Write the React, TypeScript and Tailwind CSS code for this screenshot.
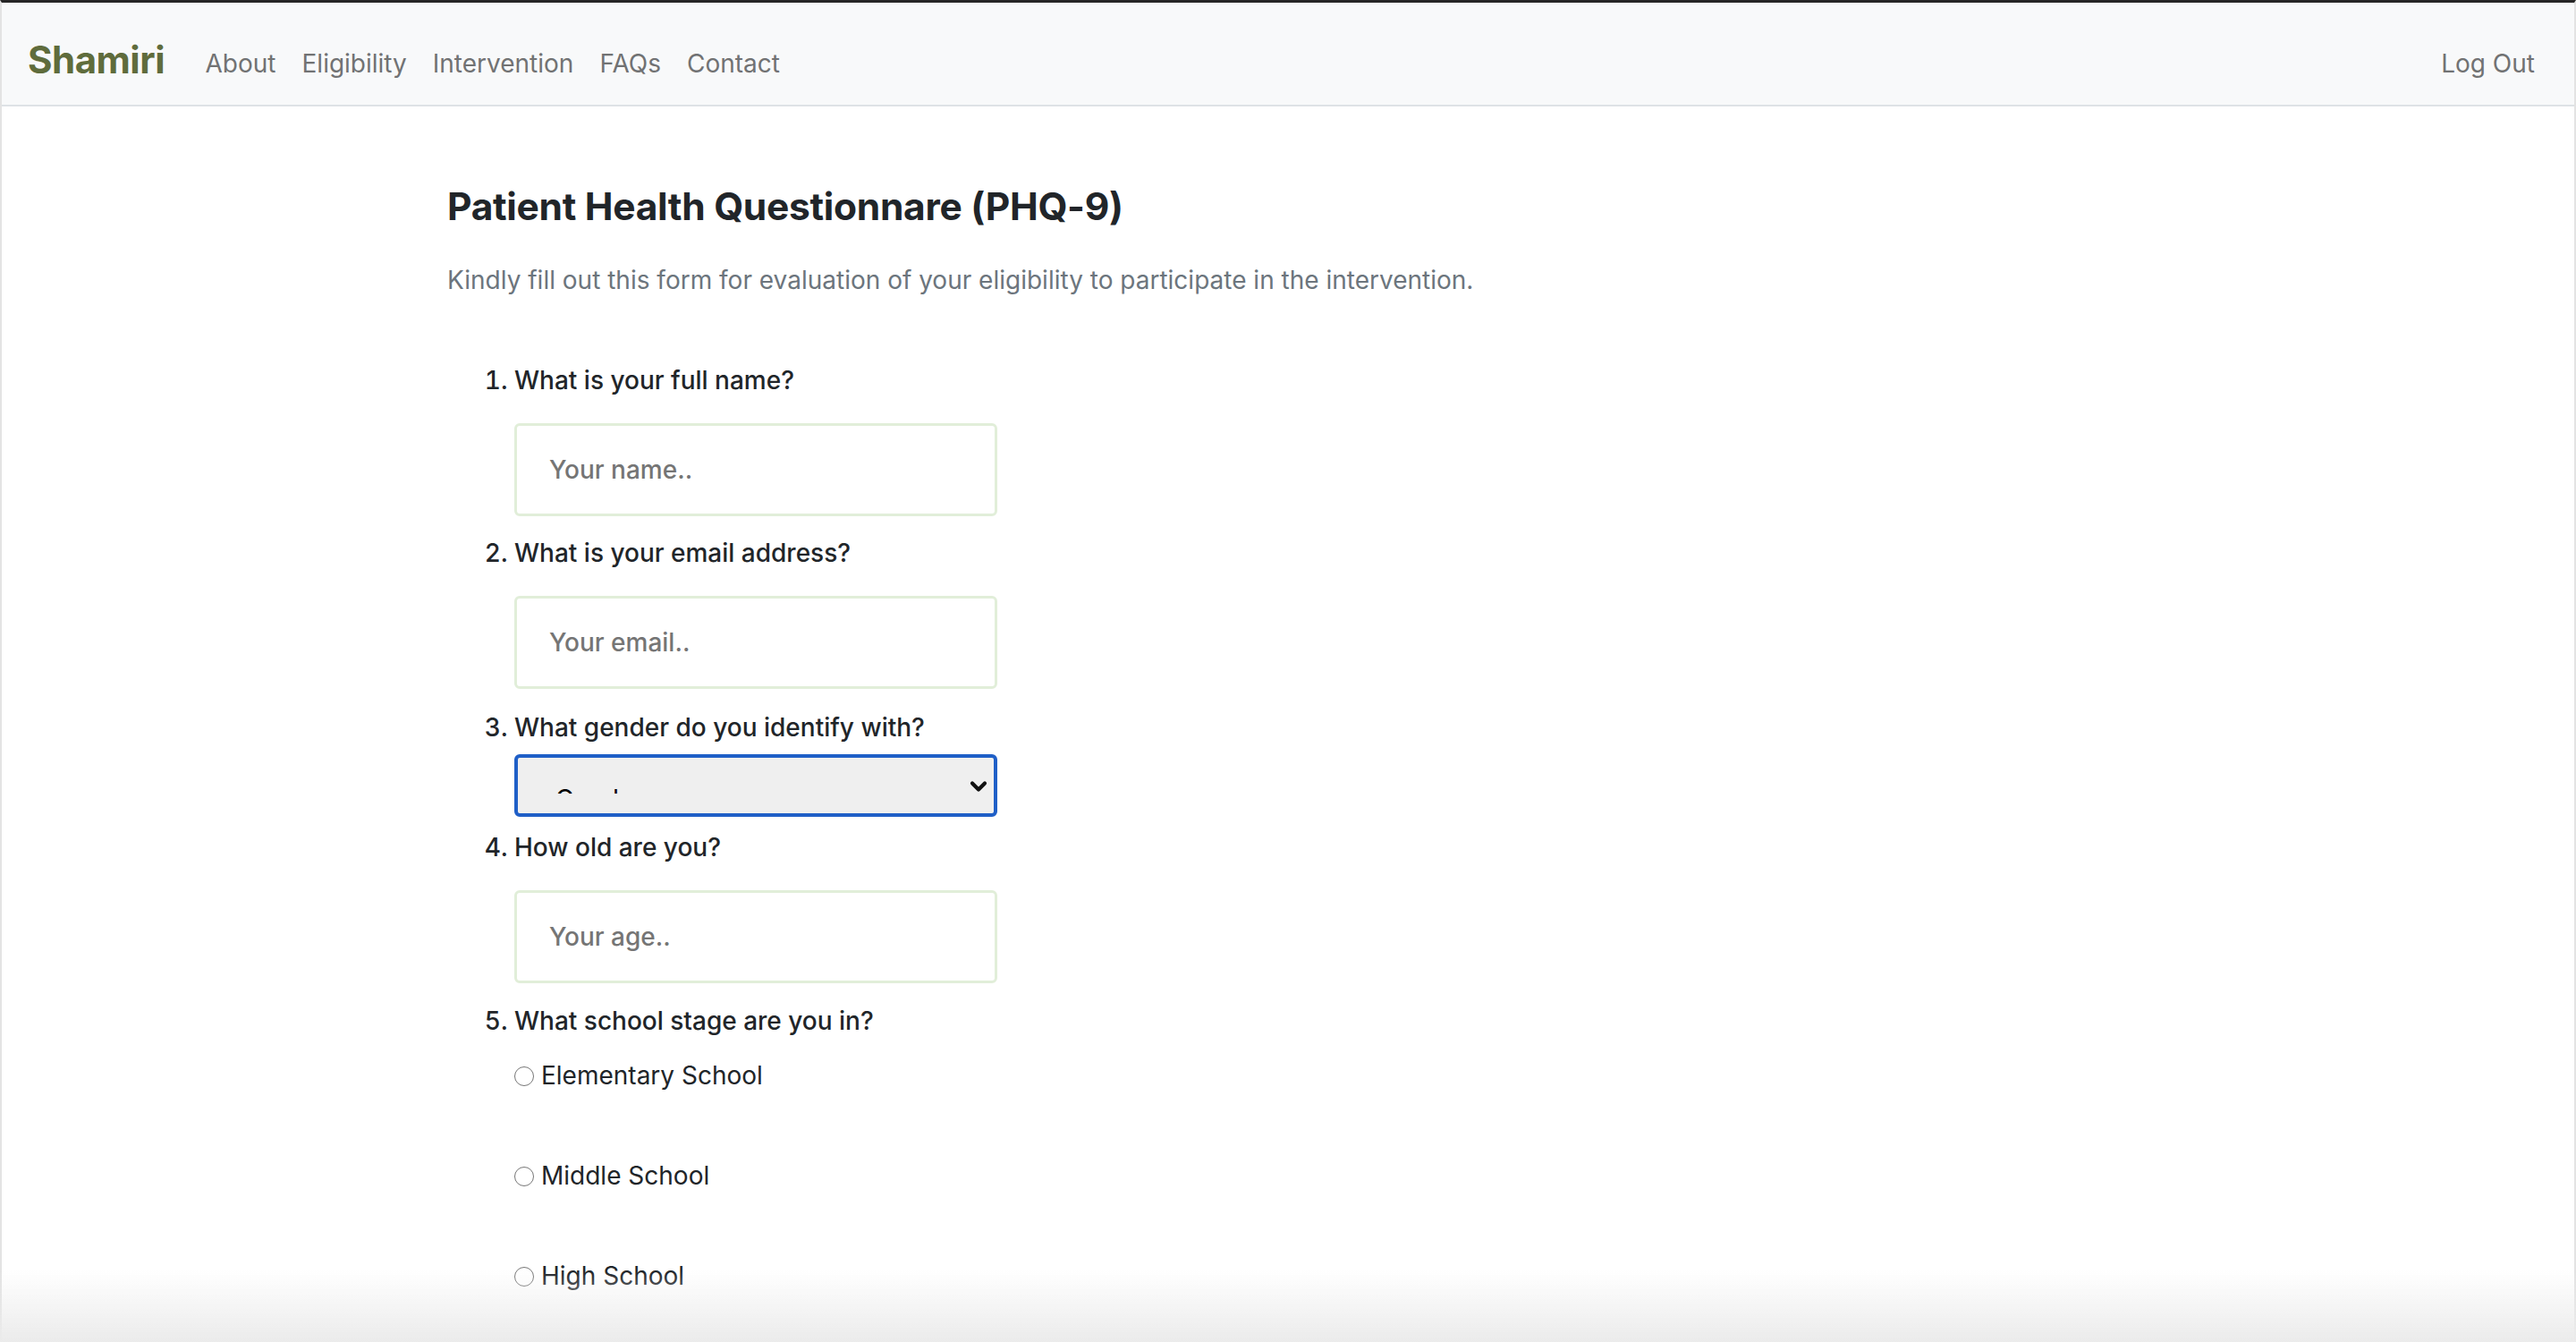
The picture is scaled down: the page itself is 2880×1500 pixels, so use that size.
import React from 'react';

const navLinks = ['About', 'Eligibility', 'Intervention', 'FAQs', 'Contact'];
const stages = ['Elementary School', 'Middle School', 'High School'];

const TextField = ({ placeholder }: { placeholder: string }) => (
  <input
    type="text"
    placeholder={placeholder}
    className="mt-[26px] block w-[540px] h-[104px] rounded-[6px] border-[3px] border-[#e1eed9] bg-white pl-[36px] text-[28px] text-[#212529] placeholder:text-[#757575] outline-none"
  />
);

const App: React.FC = () => {
  return (
    <div
      className="relative min-h-screen bg-white border-t-[3px] border-t-[#262626] border-x-2 border-x-[#e3e3e3] text-[#212529]"
      style={{ fontFamily: 'Inter, "Noto Sans", sans-serif' }}
    >
      {/* Navbar */}
      <nav className="flex items-center h-[116px] bg-[#f8f9fa] border-b-2 border-[#dee2e6] pt-[22px] pl-[29px] pr-[44px]">
        <a href="#" className="text-[42px] font-bold text-[#5f6c3c] tracking-[-0.5px] mr-[31px] mb-[10px]">
          Shamiri
        </a>
        <div className="flex items-center">
          {navLinks.map((link) => (
            <a key={link} href="#" className="px-[14.5px] text-[28px] text-[#717273]">
              {link}
            </a>
          ))}
        </div>
        <a href="#" className="ml-auto text-[28px] text-[#717273]">
          Log Out
        </a>
      </nav>

      <main className="pl-[498px] pt-[82px] pb-[120px]">
        <h3 className="text-[42.5px] leading-[60px] font-bold tracking-[-0.3px]">
          Patient Health Questionnare (PHQ-9)
        </h3>
        <p className="mt-[31px] text-[28px] leading-[43px] text-[#6c757d]">
          Kindly fill out this form for evaluation of your eligibility to participate in the intervention.
        </p>

        <ol className="mt-[69px] list-decimal pl-[75px] text-[28px] leading-[43px] font-medium">
          <li>
            <label>What is your full name?</label>
            <TextField placeholder="Your name.." />
          </li>
          <li className="mt-[20px]">
            <label>What is your email address?</label>
            <TextField placeholder="Your email.." />
          </li>
          <li className="mt-[22px]">
            <label>What gender do you identify with?</label>
            {/* focused select, its text clipped by the box */}
            <div className="relative mt-[8px] w-[540px] h-[70px] rounded-[6px] border-[4px] border-[#1f5fc7] bg-[#efefef]">
              <div className="absolute left-[42px] top-[34px] h-[6px] overflow-hidden">
                <span className="block -mt-[9px] text-[28px] leading-[43px] font-normal text-black">Gender</span>
              </div>
              <svg
                className="absolute right-[6px] top-[24px]"
                width="22"
                height="16"
                viewBox="0 0 22 16"
                fill="none"
              >
                <path d="M4 4.5l7 7 7-7" stroke="#111" strokeWidth="4.2" strokeLinecap="round" strokeLinejoin="round" />
              </svg>
            </div>
          </li>
          <li className="mt-[13px]">
            <label>How old are you?</label>
            <TextField placeholder="Your age.." />
          </li>
          <li className="mt-[21px]">
            <label>What school stage are you in?</label>
            <div className="mt-[18px] flex flex-col gap-[69px] font-normal">
              {stages.map((stage) => (
                <label key={stage} className="flex items-center gap-[8px]">
                  <span className="inline-block w-[22px] h-[22px] rounded-full border-[1.5px] border-[#767676] bg-white" />
                  {stage}
                </label>
              ))}
            </div>
          </li>
        </ol>
      </main>

      {/* bottom window shadow */}
      <div className="pointer-events-none fixed bottom-0 left-0 right-0 h-[80px] bg-gradient-to-b from-transparent to-[#ebebeb]" />
    </div>
  );
};

export default App;
